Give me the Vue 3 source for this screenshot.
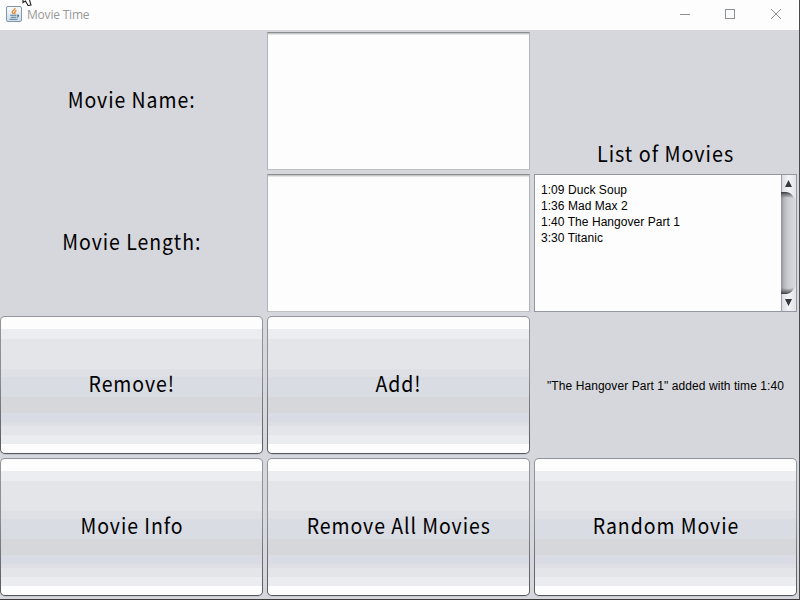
<script setup>
import { ref } from 'vue'

const movies = ref(['1:09 Duck Soup', '1:36 Mad Max 2', '1:40 The Hangover Part 1', '3:30 Titanic'])
const status = ref('"The Hangover Part 1" added with time 1:40')
const name = ref('')
const length = ref('')
</script>

<template>
  <div class="window">
    <header class="titlebar">
      <svg class="cursor" width="12" height="6" viewBox="0 0 12 6">
        <path d="M1 0L1 2.5L3.5 1L6 5.5L9 5L7.5 0" fill="#fff" stroke="#222" stroke-width="1.1" />
      </svg>
      <svg class="logo" width="16" height="16" viewBox="0 0 16 16">
        <defs>
          <linearGradient id="tile" x1="0" y1="0" x2="0" y2="1">
            <stop offset="0" stop-color="#fbfcfd" />
            <stop offset="1" stop-color="#cfdde8" />
          </linearGradient>
        </defs>
        <rect x=".5" y=".5" width="15" height="15" rx="1.5" fill="url(#tile)" stroke="#7f97aa" />
        <path d="M9 2C9.5 4 5.5 4.5 6.3 6.5L7.5 8.2M10.5 4.3C8 5.2 9.6 6.5 8.5 8" fill="none" stroke="#e8862e" stroke-width="1.4" />
        <path d="M4 9.2H10.5M4.8 11.2H10M3.5 13.3H11.5M11 9.2C13.5 8.8 13 11 10.6 11.3" fill="none" stroke="#557b9b" stroke-width="1.1" />
      </svg>
      <span class="title">Movie Time</span>
      <svg class="controls" width="108" height="14" viewBox="0 0 108 14" fill="none" stroke="#8e9294">
        <path d="M3 7.5H13" />
        <rect x="48.5" y="2.5" width="9" height="9" />
        <path d="M94 2L104 12M104 2L94 12" />
      </svg>
    </header>
    <main class="grid">
      <div class="cell"><span class="big">Movie Name:</span></div>
      <textarea v-model="name" class="field"></textarea>
      <div class="cell low"><span class="big">List of Movies</span></div>
      <div class="cell"><span class="big">Movie Length:</span></div>
      <textarea v-model="length" class="field"></textarea>
      <div class="list">
        <ul>
          <li v-for="m in movies" :key="m">{{ m }}</li>
        </ul>
        <svg width="15" height="136" viewBox="0 0 15 136">
          <defs>
            <linearGradient id="thumb">
              <stop offset="0" stop-color="#8e9095" />
              <stop offset=".2" stop-color="#b5b7bc" />
              <stop offset=".5" stop-color="#cccdd2" />
              <stop offset="1" stop-color="#d9dae0" />
            </linearGradient>
            <linearGradient id="cap">
              <stop offset="0" stop-color="#d8d9de" />
              <stop offset=".5" stop-color="#f3f4f6" />
              <stop offset="1" stop-color="#e2e3e8" />
            </linearGradient>
            <linearGradient id="shade" x1="0" y1="0" x2="0" y2="1">
              <stop offset="0" stop-color="#292a2d" stop-opacity=".9" />
              <stop offset="1" stop-color="#777" stop-opacity="0" />
            </linearGradient>
            <linearGradient id="shade2" x1="0" y1="1" x2="0" y2="0">
              <stop offset="0" stop-color="#292a2d" stop-opacity=".9" />
              <stop offset="1" stop-color="#777" stop-opacity="0" />
            </linearGradient>
          </defs>
          <rect width="15" height="136" fill="url(#thumb)" />
          <path d="M0 17H7Q11 18 13 24Q8 20 0 24Z" fill="url(#shade)" />
          <path d="M0 119H7Q11 118 13 112Q8 116 0 112Z" fill="url(#shade2)" />
          <path d="M0 0H15V25Q11 17 5 17H0Z" fill="url(#cap)" />
          <path d="M0 136H15V111Q11 119 5 119H0Z" fill="url(#cap)" />
          <path d="M.5 0V17M.5 119V136" stroke="#9ea1a8" />
          <path d="M7.5 5L11 12H4Z M7.5 131L11 124H4Z" fill="#36383c" />
        </svg>
      </div>
      <button><span class="big">Remove!</span></button>
      <button><span class="big">Add!</span></button>
      <div class="cell status">{{ status }}</div>
      <button><span class="big">Movie Info</span></button>
      <button><span class="big">Remove All Movies</span></button>
      <button><span class="big">Random Movie</span></button>
    </main>
  </div>
</template>

<style>
body {
  margin: 0;
  overflow: hidden;
}
</style>

<style scoped>
.window {
  box-sizing: border-box;
  width: 800px;
  height: 600px;
  overflow: hidden;
  background: #d6d7dc;
  border-right: 1px solid #48494b;
  border-bottom: 1px solid #3c3a3d;
  color: #000;
  font-family: "Liberation Sans", Arial, sans-serif;
}
.titlebar {
  position: relative;
  display: flex;
  align-items: center;
  box-sizing: border-box;
  height: 30px;
  padding: 0 14px 2px 6px;
  background: #fdfdfd;
}
.cursor {
  position: absolute;
  left: 22px;
  top: 0;
}
.title {
  flex: 1;
  margin-left: 5px;
  color: #999;
  font: 12px "Open Sans", sans-serif;
  letter-spacing: -0.2px;
}
.grid {
  display: grid;
  grid-template-columns: repeat(3, 263px);
  grid-template-rows: repeat(4, 138px);
  gap: 4px;
  padding-top: 2px;
}
.cell {
  display: flex;
  align-items: center;
  justify-content: center;
}
.low {
  align-items: flex-end;
  padding-bottom: 3px;
}
.big {
  display: inline-block;
  font-family: "Noto Sans CJK JP", sans-serif;
  font-size: 21.5px;
  line-height: 26px;
  letter-spacing: 1.05px;
  white-space: nowrap;
  transform: translateY(-2px) scaleX(0.905);
}
.field {
  display: block;
  box-sizing: border-box;
  width: 263px;
  height: 138px;
  margin: 0;
  border: 1px solid #b1b3b8;
  border-top-color: #8b8d91;
  border-bottom-color: #bec0c4;
  background: #fdfdfd;
  box-shadow: inset 0 1px #c3c5c6, inset 0 2px #e5e7e7;
  resize: none;
  outline: none;
}
.list {
  display: flex;
  box-sizing: border-box;
  border: 1px solid #9297a1;
  background: #fdfdfd;
}
.list ul {
  flex: 1;
  margin: 0;
  padding: 7px 6px;
  list-style: none;
  font-size: 12px;
  line-height: 16px;
  letter-spacing: 0.05px;
}
.status {
  padding-top: 1px;
  font-size: 12px;
  letter-spacing: 0.07px;
}
.low .big {
  transform: translateY(-1px) scaleX(0.92);
}
button {
  box-sizing: border-box;
  margin: 0;
  padding: 0;
  border: 1px solid transparent;
  border-radius: 5px;
  font-family: inherit;
  color: #000;
  box-shadow: 0 1px #c5c7ce;
  background:
    linear-gradient(#fdfdfd 12px, #ecedf1 12px 22px, #e4e5e9 22px 52px, #dee0e5 52px 60px, #d9dce3 60px 80px, #d6d7db 80px 96px, #d9dce4 96px 105px, #dedfe4 105px 109px, #e4e5e9 109px 118px, #ebecf0 118px 127px, #fdfdfd 127px) padding-box,
    linear-gradient(#92959b, #898c91 45%, #55575c) border-box;
}
</style>
